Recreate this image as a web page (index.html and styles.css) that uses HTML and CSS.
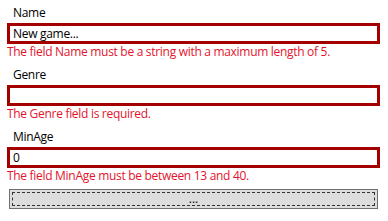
FILE: index.html
```html
<!DOCTYPE html>
<html lang="en">
<head>
    <meta charset="UTF-8">
    <title>Game</title>
    <link rel="stylesheet" href="styles.css">
</head>
<body>
    <div class="form">
        <div class="field">
            <div class="label">Name</div>
            <div class="input invalid">New game...</div>
            <div class="error">The field Name must be a string with a maximum length of 5.</div>
        </div>
        <div class="field">
            <div class="label">Genre</div>
            <div class="input invalid"></div>
            <div class="error">The Genre field is required.</div>
        </div>
        <div class="field">
            <div class="label">MinAge</div>
            <div class="input invalid">0</div>
            <div class="error">The field MinAge must be between 13 and 40.</div>
        </div>
        <button class="button"><span class="focus">...</span></button>
    </div>
</body>
</html>
```

FILE: styles.css
```css
* {
    margin: 0;
    padding: 0;
    box-sizing: border-box;
    font-family: "Open Sans", "Noto Sans", sans-serif;
}

body {
    background: #ffffff;
    color: #000000;
    font-size: 12px;
    letter-spacing: -0.3px;
}

.form {
    padding: 3px 8px 0 7px;
    width: 388px;
}

.field {
    margin-bottom: 5px;
}

.label {
    height: 20px;
    line-height: 20px;
    padding-left: 6px;
}

.input {
    height: 21px;
    line-height: 15px;
    padding-left: 3px;
    border: 3px solid #a40000;
    background: #fff;
}

.error {
    height: 16px;
    line-height: 16px;
    color: #e3132c;
}

.button {
    display: block;
    width: 369px;
    height: 20px;
    margin: 3px 0 0 2px;
    padding: 2px;
    background: #dddddd;
    border: 1px solid #707070;
    font-size: 12px;
}

.focus {
    display: block;
    height: 14px;
    line-height: 12px;
    border: 1px dashed #333;
    text-align: center;
}
```
